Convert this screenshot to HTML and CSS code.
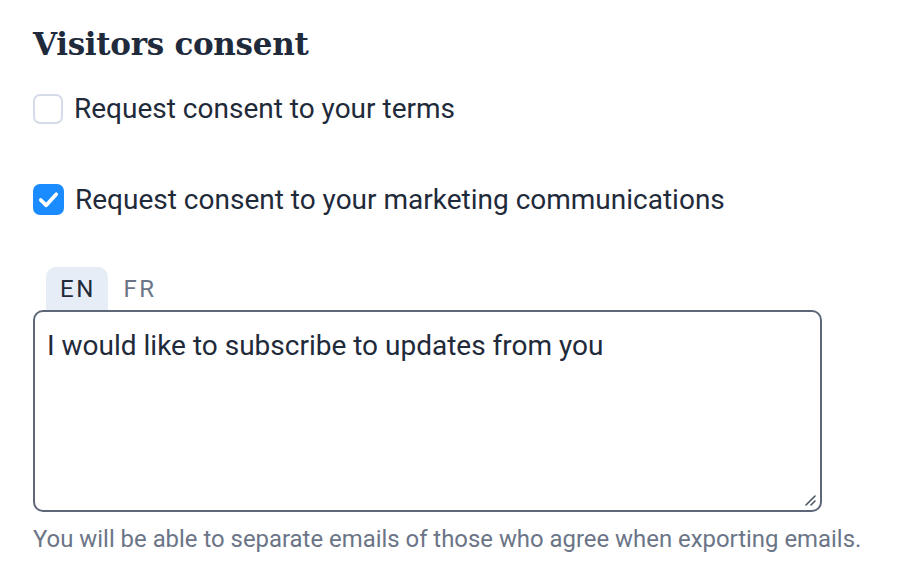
FILE: index.html
```html
<!DOCTYPE html>
<html>
<head>
<meta charset="utf-8">
<link rel="stylesheet" href="styles.css">
</head>
<body>
<div class="panel">
  <h2 class="title">Visitors consent</h2>
  <label class="check-row">
    <span class="box"></span>
    <span class="label">Request consent to your terms</span>
  </label>
  <label class="check-row checked-row">
    <span class="box checked">
      <svg viewBox="0 0 30 30" width="31" height="31"><path d="M7.5 15.5 L12.8 20.6 L22.5 10" fill="none" stroke="#fff" stroke-width="3.6" stroke-linecap="round" stroke-linejoin="round"/></svg>
    </span>
    <span class="label">Request consent to your marketing communications</span>
  </label>
  <div class="field">
    <div class="tabs">
      <span class="tab active">EN</span>
      <span class="tab">FR</span>
    </div>
    <div class="textarea">I would like to subscribe to updates from you
      <svg class="grip" viewBox="0 0 14 14" width="14" height="14"><path d="M3 12 L12 3 M8 12 L12 8" stroke="#4b5563" stroke-width="1.6" stroke-linecap="round"/></svg>
    </div>
    <p class="hint">You will be able to separate emails of those who agree when exporting emails.</p>
  </div>
</div>
</body>
</html>
```
FILE: styles.css
```css
html, body {
  margin: 0;
  padding: 0;
  background: #ffffff;
}
body {
  font-family: Roboto, "Liberation Sans", sans-serif;
  color: #1f2a3a;
}
.panel {
  padding: 22px 0 0 33px;
  width: 860px;
}
.title {
  margin: 0;
  font-family: "DejaVu Serif", "Liberation Serif", serif;
  font-weight: bold;
  font-size: 31px;
  line-height: 44px;
  color: #1f2b3c;
  letter-spacing: -0.3px;
}
.check-row {
  display: flex;
  align-items: center;
  gap: 11px;
  margin-top: 27px;
  height: 31px;
}
.checked-row {
  margin-top: 60px;
}
.box {
  width: 26px;
  height: 26px;
  border: 2px solid #d3dce8;
  border-radius: 7px;
  box-sizing: content-box;
  display: flex;
  align-items: center;
  justify-content: center;
}
.box.checked {
  width: 31px;
  height: 31px;
  border: none;
  background: #1a8cff;
}
.label {
  font-size: 28px;
  color: #1f2a3a;
}
.field {
  margin-top: 52px;
}
.tabs {
  display: flex;
  padding-left: 13px;
  height: 43px;
}
.tab {
  width: 62px;
  display: flex;
  align-items: center;
  justify-content: center;
  padding-top: 1px;
  padding-left: 2px;
  box-sizing: border-box;
  font-size: 24px;
  letter-spacing: 2.5px;
  color: #6b7587;
  border-radius: 10px 10px 0 0;
}
.tab.active {
  background: #e6edf6;
  color: #1f2a3a;
}
.textarea {
  position: relative;
  width: 789px;
  height: 202px;
  box-sizing: border-box;
  border: 2px solid #5d6779;
  border-radius: 10px;
  padding: 16px 12px;
  font-size: 28px;
  line-height: 36px;
  color: #1f2a3a;
}
.grip {
  position: absolute;
  right: 3px;
  bottom: 3px;
}
.hint {
  margin: 13px 0 0;
  font-size: 23.9px;
  line-height: 28px;
  white-space: nowrap;
  color: #6b7587;
}
```
